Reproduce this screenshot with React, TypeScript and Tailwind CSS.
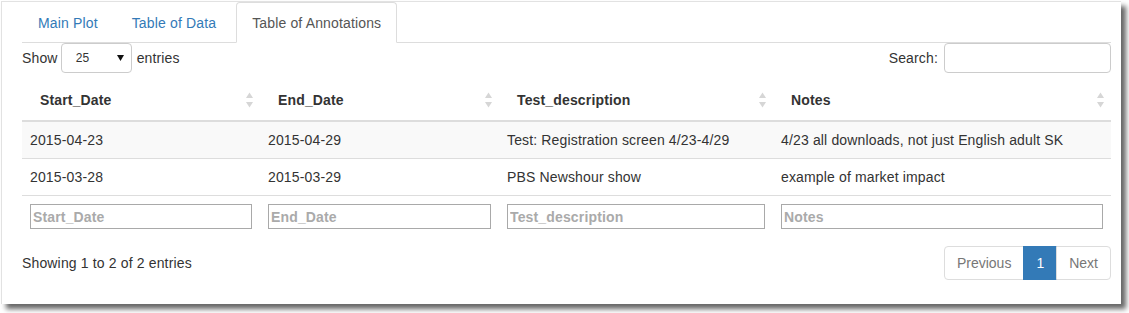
import React from "react";

const columns = [
  { key: "Start_Date", width: "w-[238px]" },
  { key: "End_Date", width: "w-[239px]" },
  { key: "Test_description", width: "w-[274px]" },
  { key: "Notes", width: "w-[338px]" },
];

const rows = [
  ["2015-04-23", "2015-04-29", "Test: Registration screen 4/23-4/29", "4/23 all downloads, not just English adult SK"],
  ["2015-03-28", "2015-03-29", "PBS Newshour show", "example of market impact"],
];

function SortBoth() {
  return (
    <svg width="7" height="16" viewBox="0 0 7 16" className="shrink-0">
      <polygon points="3.5,0.5 7,6 0,6" fill="#d6d6d6" />
      <polygon points="0,10 7,10 3.5,15.5" fill="#d6d6d6" />
    </svg>
  );
}

export default function App() {
  return (
    <div className="w-[1129px] h-[313px] bg-white font-['Liberation_Sans',Arial,sans-serif] text-[14px] leading-[20px] tracking-[0.15px] text-[#333]">
      <div className="ml-[1px] mt-[1px] w-[1120px] h-[303px] bg-white border-l border-t border-[#e2e2e2] shadow-[5px_5px_5px_rgba(0,0,0,0.6)] pl-[20px]">
        <div className="w-[1089px]">
          {/* tabs */}
          <div className="flex border-b border-[#ddd]">
            <a className="mr-[2px] mb-[-1px] px-[15px] pt-[10px] pb-[9px] border border-transparent rounded-t-[4px] text-[#337ab7]">
              Main Plot
            </a>
            <a className="mr-[2px] mb-[-1px] px-[15px] pt-[10px] pb-[9px] border border-transparent rounded-t-[4px] text-[#337ab7]">
              Table of Data
            </a>
            <a className="ml-[2px] mb-[-1px] px-[15px] pt-[10px] pb-[9px] border border-[#ddd] border-b-white bg-white rounded-t-[4px] text-[#555]">
              Table of Annotations
            </a>
          </div>

          {/* length + search */}
          <div className="flex justify-between items-center h-[30px]">
            <div className="flex items-center">
              <span>Show</span>
              <div className="ml-[3px] w-[71px] h-[30px] border border-[#ccc] rounded-[4px] flex items-center justify-between pl-[14px] pr-[7px] text-[12px]">
                <span>25</span>
                <svg width="7" height="6" viewBox="0 0 7 6">
                  <polygon points="0,0 7,0 3.5,6" fill="#111" />
                </svg>
              </div>
              <span className="ml-[5px]">entries</span>
            </div>
            <div className="flex items-center">
              <span>Search:</span>
              <input className="ml-[6px] w-[167px] h-[30px] border border-[#ccc] rounded-[4px] outline-none" />
            </div>
          </div>

          {/* table */}
          <table className="mt-[7px] w-[1089px] table-fixed border-collapse">
            <colgroup>
              {columns.map((c) => (
                <col key={c.key} className={c.width} />
              ))}
            </colgroup>
            <thead>
              <tr>
                {columns.map((c) => (
                  <th key={c.key} className="pl-[18px] pr-[7px] py-[10px] text-left font-bold border-b-2 border-[#ddd]">
                    <div className="flex items-center justify-between">
                      <span>{c.key}</span>
                      <SortBoth />
                    </div>
                  </th>
                ))}
              </tr>
            </thead>
            <tbody>
              {rows.map((r, i) => (
                <tr key={i} className={i === 0 ? "bg-[#f9f9f9]" : "border-t border-[#ddd]"}>
                  {r.map((cell, j) => (
                    <td key={j} className="px-[8px] py-[8px] whitespace-nowrap">
                      {cell}
                    </td>
                  ))}
                </tr>
              ))}
              <tr className="border-t border-[#ddd]">
                {columns.map((c) => (
                  <td key={c.key} className="px-[8px] py-[8px]">
                    <input
                      placeholder={c.key}
                      className="block w-full h-[25px] border border-[#a9a9a9] px-[2px] font-bold text-[14px] placeholder:text-[#aaa] outline-none"
                    />
                  </td>
                ))}
              </tr>
            </tbody>
          </table>

          {/* info + pagination */}
          <div className="mt-[9px] flex justify-between items-center">
            <span>Showing 1 to 2 of 2 entries</span>
            <div className="flex tracking-normal">
              <span className="px-[12px] py-[6px] border border-[#ddd] rounded-l-[4px] text-[#777]">Previous</span>
              <span className="ml-[-1px] px-[12px] py-[6px] border border-[#337ab7] bg-[#337ab7] text-white">1</span>
              <span className="ml-[-1px] px-[12px] py-[6px] border border-[#ddd] rounded-r-[4px] text-[#777]">Next</span>
            </div>
          </div>
        </div>
      </div>
    </div>
  );
}
